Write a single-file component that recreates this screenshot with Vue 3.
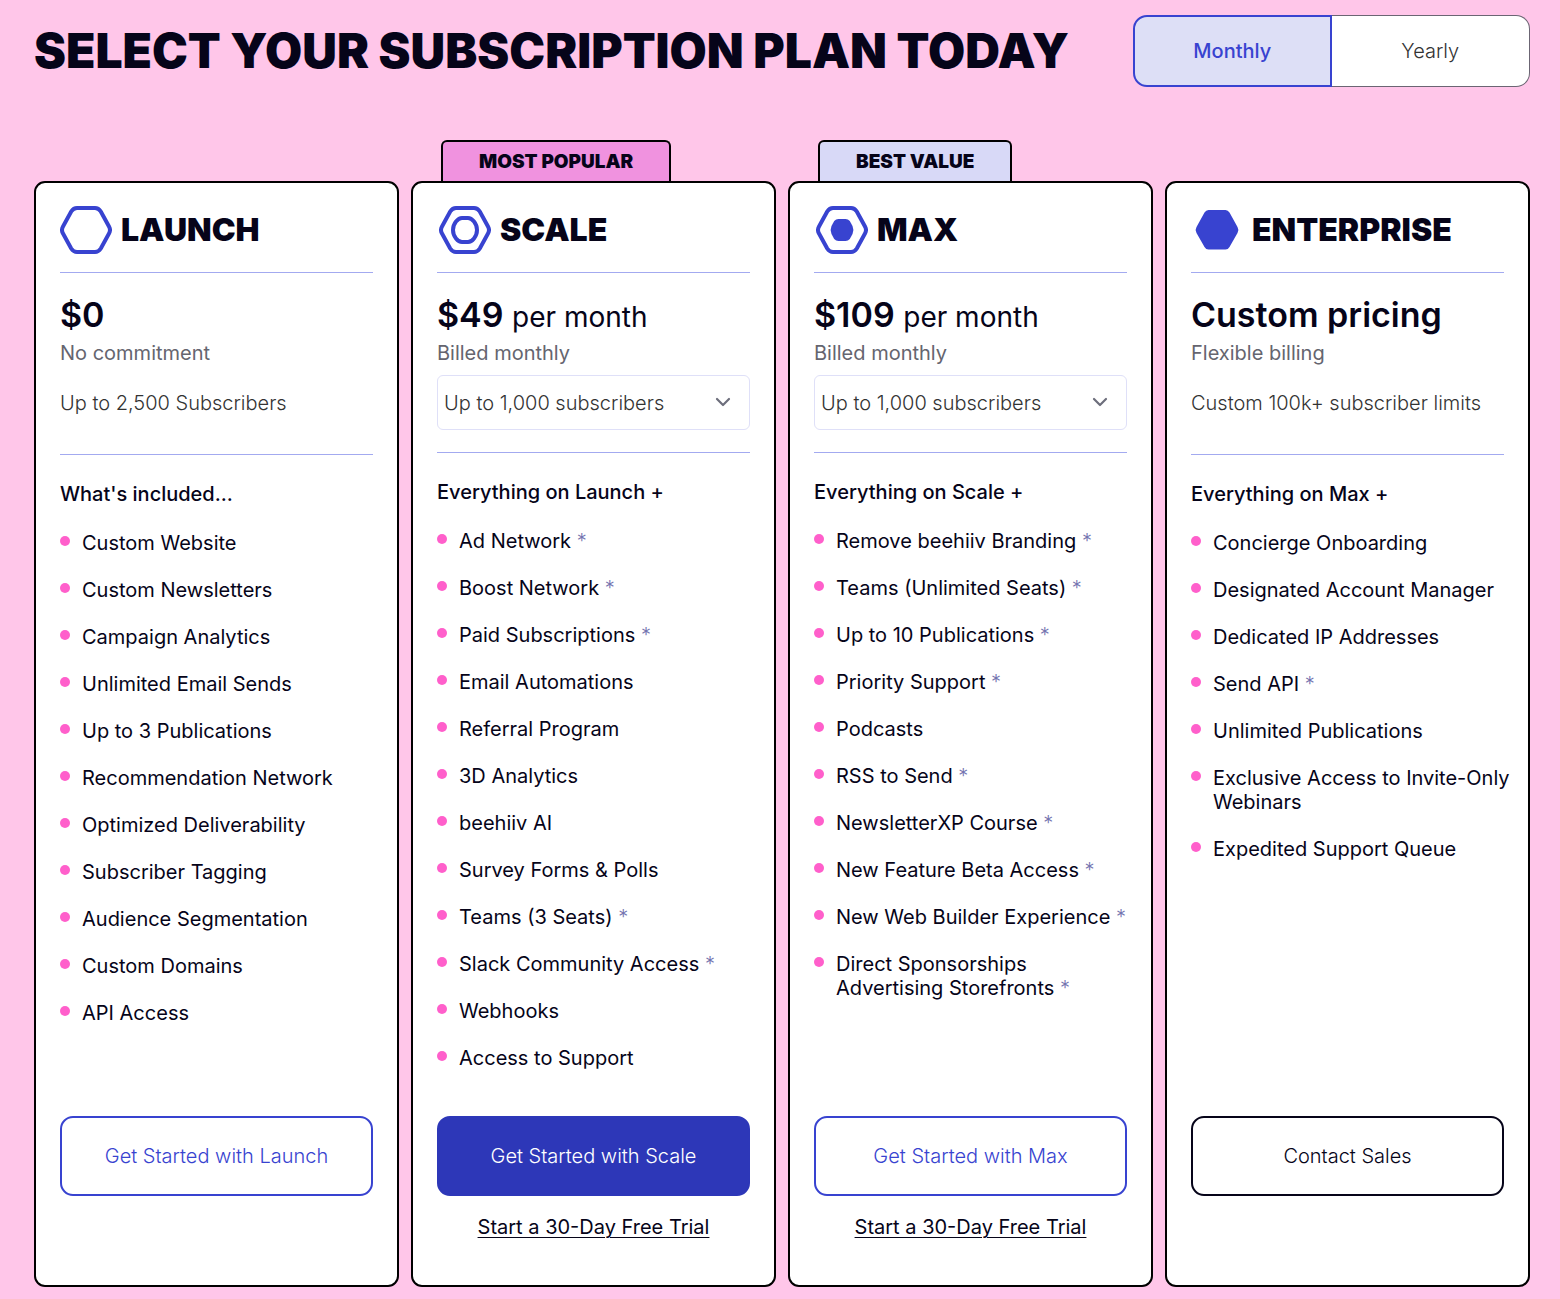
<script setup>
import { ref } from 'vue'

const billing = ref('monthly')

const limits = ['Up to 1,000 subscribers', 'Up to 2,500 subscribers', 'Up to 5,000 subscribers', 'Up to 10,000 subscribers']

const plans = [
  {
    id: 'launch',
    name: 'Launch',
    price: '$0',
    note: 'No commitment',
    limit: 'Up to 2,500 Subscribers',
    intro: "What's included...",
    features: [
      ['Custom Website'],
      ['Custom Newsletters'],
      ['Campaign Analytics'],
      ['Unlimited Email Sends'],
      ['Up to 3 Publications'],
      ['Recommendation Network'],
      ['Optimized Deliverability'],
      ['Subscriber Tagging'],
      ['Audience Segmentation'],
      ['Custom Domains'],
      ['API Access'],
    ],
    cta: 'Get Started with Launch',
    style: 'outline',
  },
  {
    id: 'scale',
    name: 'Scale',
    badge: 'Most Popular',
    price: '$49',
    per: 'per month',
    note: 'Billed monthly',
    intro: 'Everything on Launch +',
    features: [
      ['Ad Network', true],
      ['Boost Network', true],
      ['Paid Subscriptions', true],
      ['Email Automations'],
      ['Referral Program'],
      ['3D Analytics'],
      ['beehiiv AI'],
      ['Survey Forms & Polls'],
      ['Teams (3 Seats)', true],
      ['Slack Community Access', true],
      ['Webhooks'],
      ['Access to Support'],
    ],
    cta: 'Get Started with Scale',
    style: 'solid',
    trial: true,
  },
  {
    id: 'max',
    name: 'Max',
    badge: 'Best Value',
    price: '$109',
    per: 'per month',
    note: 'Billed monthly',
    intro: 'Everything on Scale +',
    features: [
      ['Remove beehiiv Branding', true],
      ['Teams (Unlimited Seats)', true],
      ['Up to 10 Publications', true],
      ['Priority Support', true],
      ['Podcasts'],
      ['RSS to Send', true],
      ['NewsletterXP Course', true],
      ['New Feature Beta Access', true],
      ['New Web Builder Experience', true],
      ['Direct Sponsorships Advertising Storefronts', true],
    ],
    cta: 'Get Started with Max',
    style: 'outline',
    trial: true,
  },
  {
    id: 'enterprise',
    name: 'Enterprise',
    price: 'Custom pricing',
    note: 'Flexible billing',
    limit: 'Custom 100k+ subscriber limits',
    intro: 'Everything on Max +',
    features: [
      ['Concierge Onboarding'],
      ['Designated Account Manager'],
      ['Dedicated IP Addresses'],
      ['Send API', true],
      ['Unlimited Publications'],
      ['Exclusive Access to Invite-Only Webinars'],
      ['Expedited Support Queue'],
    ],
    cta: 'Contact Sales',
    style: 'dark',
  },
]
</script>

<template>
  <main class="pricing">
    <header class="top">
      <h1>Select your subscription plan today</h1>
      <div class="toggle" role="group" aria-label="Billing period">
        <button type="button" :class="{ active: billing === 'monthly' }" @click="billing = 'monthly'">Monthly</button>
        <button type="button" :class="{ active: billing === 'yearly' }" @click="billing = 'yearly'">Yearly</button>
      </div>
    </header>

    <section class="plans">
      <article v-for="plan in plans" :key="plan.id" class="card">
        <span v-if="plan.badge" class="badge" :class="plan.id">{{ plan.badge }}</span>

        <div class="name" :class="{ featured: plan.badge }">
          <svg class="icon" viewBox="0 0 52 48" width="52" height="48" aria-hidden="true">
            <path
              v-if="plan.id !== 'enterprise'"
              d="M17 2H35Q38.500 2 40.800 5.500L49 20.500Q51 24 49 27.500L40.800 42.500Q38.500 46 35 46H17Q13.500 46 11.200 42.500L3 27.500Q1 24 3 20.500L11.200 5.500Q13.500 2 17 2Z"
              fill="none" stroke="#3843d0" stroke-width="4"
            />
            <path
              v-if="plan.id === 'scale'"
              d="M23 12H29C33 12 38 17.500 38 24S33 36 29 36H23C19 36 14 30.500 14 24S19 12 23 12Z"
              fill="none" stroke="#3843d0" stroke-width="4"
            />
            <path
              v-if="plan.id === 'max'"
              d="M22.500 13H29.500Q32 13 33.800 15L36.500 20Q38.300 24 36.500 28L33.800 33Q32 35 29.500 35H22.500Q20 35 18.200 33L15.500 28Q13.700 24 15.500 20L18.200 15Q20 13 22.500 13Z"
              fill="#3843d0"
            />
            <path
              v-if="plan.id === 'enterprise'"
              d="M17.500 4H34.500Q37 4 38.500 6.500L46.500 21Q48.300 24 46.500 27L38.500 41Q37 43.500 34.500 43.500H17.500Q15 43.500 13.500 41L5.500 27Q3.700 24 5.500 21L13.500 6.500Q15 4 17.500 4Z"
              fill="#3843d0"
            />
          </svg>
          <h2>{{ plan.name }}</h2>
        </div>

        <div class="cost">
          <p class="price">{{ plan.price }} <span v-if="plan.per">{{ plan.per }}</span></p>
          <p class="note">{{ plan.note }}</p>
          <p v-if="plan.limit" class="limit">{{ plan.limit }}</p>
          <div v-else class="picker">
            <select :aria-label="`${plan.name} subscriber limit`">
              <option v-for="limit in limits" :key="limit">{{ limit }}</option>
            </select>
            <svg viewBox="0 0 16 10" width="16" height="10" aria-hidden="true">
              <path d="M2 2L8 8L14 2" fill="none" stroke="#6d6e7c" stroke-width="2.200" stroke-linecap="round" stroke-linejoin="round" />
            </svg>
          </div>
        </div>

        <h3>{{ plan.intro }}</h3>
        <ul>
          <li v-for="[text, starred] in plan.features" :key="text">
            {{ text }} <span v-if="starred" class="star">*</span>
          </li>
        </ul>

        <footer>
          <button type="button" class="cta" :class="plan.style">{{ plan.cta }}</button>
          <a v-if="plan.trial" href="#">Start a 30-Day Free Trial</a>
        </footer>
      </article>
    </section>
  </main>
</template>

<style>
body {
  margin: 0;
  background: #ffc6e9;
}
</style>

<style scoped>
.pricing {
  box-sizing: border-box;
  padding: 15px 30px 12px 34px;
  background: #ffc6e9;
  color: #060419;
  font-family: Inter, "Liberation Sans", sans-serif;
  font-size: 20px;
  line-height: 24px;
}

.pricing * {
  box-sizing: border-box;
}

h1, h2, h3, p, ul {
  margin: 0;
  padding: 0;
}

button, select {
  font: inherit;
  color: inherit;
}

button {
  cursor: pointer;
}

.top {
  display: flex;
  align-items: center;
  justify-content: space-between;
  gap: 24px;
}

h1 {
  font-size: 48px;
  line-height: 56px;
  font-weight: 900;
  text-transform: uppercase;
  white-space: nowrap;
}

.toggle {
  display: grid;
  grid-template-columns: 1fr 1fr;
  flex: 0 1 397px;
}

.toggle button {
  height: 72px;
  background: #fff;
  border: 1px solid #6b6573;
  color: #333;
  font-weight: 300;
}

.toggle button:first-child {
  border-radius: 14px 0 0 14px;
}

.toggle button:last-child {
  border-left: 0;
  border-radius: 0 14px 14px 0;
}

.toggle button.active {
  background: #dddff6;
  border: 2px solid #3843d0;
  color: #3843d0;
  font-weight: 500;
}

.plans {
  display: grid;
  grid-template-columns: repeat(4, minmax(0, 1fr));
  gap: 12px;
  margin-top: 94px;
}

.card {
  position: relative;
  display: flex;
  flex-direction: column;
  padding: 23px 24px 24px;
  background: #fff;
  border: 2px solid #000;
  border-radius: 11px;
}

.badge {
  position: absolute;
  left: 28px;
  bottom: calc(100% + 2px);
  height: 41px;
  padding: 8px 36px 0;
  border: 2px solid #000;
  border-bottom: 0;
  border-radius: 6px 6px 0 0;
  font-size: 19px;
  font-weight: 900;
  text-transform: uppercase;
  white-space: nowrap;
}

.badge.scale {
  background: #f092df;
}

.badge.max {
  background: #d8d9f7;
}

.name {
  display: flex;
  align-items: center;
  gap: 9px;
  padding-bottom: 18px;
  border-bottom: 1px solid #a3aaf0;
}

.name.featured {
  padding-left: 2px;
}

h2 {
  font-size: 32px;
  line-height: 40px;
  font-weight: 900;
  text-transform: uppercase;
}

.cost {
  padding-top: 20px;
  padding-bottom: 22px;
  border-bottom: 1px solid #a3aaf0;
}

.price {
  font-size: 34px;
  line-height: 44px;
  font-weight: 600;
}

.price span {
  font-size: 28px;
  line-height: 28px;
  font-weight: 400;
}

.note {
  margin-top: 4px;
  color: #65656f;
}

.limit {
  margin: 26px 0 17px;
  color: #333;
  font-weight: 300;
}

.picker {
  position: relative;
  margin-top: 10px;
}

select {
  display: block;
  width: 100%;
  height: 55px;
  padding: 0 40px 0 6px;
  appearance: none;
  background: #fff;
  border: 1px solid #dfe0f8;
  border-radius: 6px;
  color: #333;
  font-weight: 300;
}

.picker svg {
  position: absolute;
  right: 19px;
  top: 22px;
  pointer-events: none;
}

h3 {
  margin-top: 27px;
  font-size: 20px;
  line-height: 24px;
  font-weight: 500;
}

ul {
  display: flex;
  flex-direction: column;
  gap: 23px;
  margin: 25px -8px 46px 0;
  list-style: none;
}

li {
  position: relative;
  padding-left: 22px;
}

li::before {
  content: "";
  position: absolute;
  left: 0;
  top: 5px;
  width: 10px;
  height: 10px;
  border-radius: 50%;
  background: #ff5fcb;
}

.star {
  color: #7474b0;
  font-weight: 300;
}

footer {
  display: flex;
  flex-direction: column;
  align-items: center;
  gap: 19px;
  min-height: 145px;
  margin-top: auto;
}

.cta {
  width: 100%;
  height: 80px;
  background: #fff;
  border: 2px solid #3843d0;
  border-radius: 13px;
  color: #3843d0;
  font-weight: 300;
}

.cta.solid {
  background: #2d37b8;
  border-color: #2d37b8;
  color: #fff;
}

.cta.dark {
  border-color: #060419;
  color: #060419;
}

a {
  color: #060419;
  text-decoration-thickness: 1px;
  text-underline-offset: 3px;
}
</style>
